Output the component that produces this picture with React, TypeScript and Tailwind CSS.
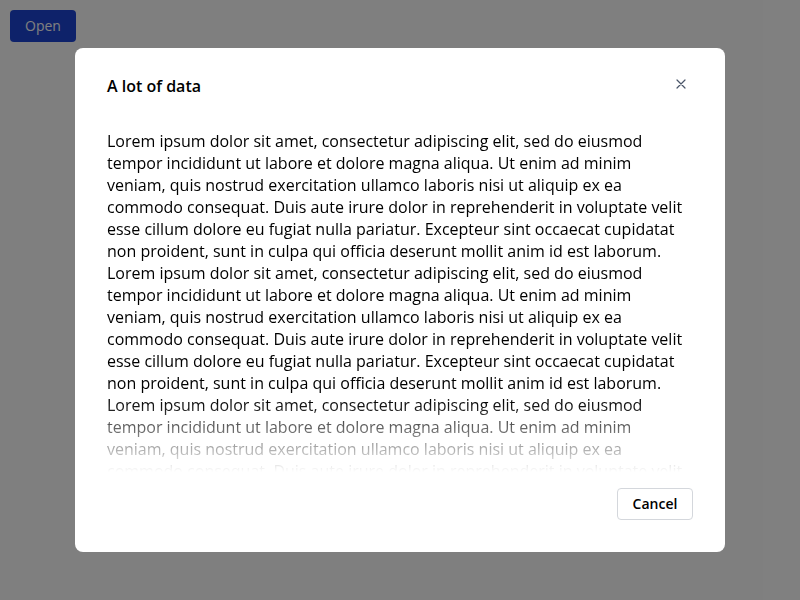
import React from "react";

const LOREM =
  "Lorem ipsum dolor sit amet, consectetur adipiscing elit, sed do eiusmod tempor incididunt ut labore et dolore magna aliqua. Ut enim ad minim veniam, quis nostrud exercitation ullamco laboris nisi ut aliquip ex ea commodo consequat. Duis aute irure dolor in reprehenderit in voluptate velit esse cillum dolore eu fugiat nulla pariatur. Excepteur sint occaecat cupidatat non proident, sunt in culpa qui officia deserunt mollit anim id est laborum.";

const App: React.FC = () => {
  return (
    <div className="relative w-[800px] h-[600px] bg-white font-['Open_Sans',sans-serif]">
      <div className="p-[10px]">
        <button className="h-8 w-[66px] rounded bg-[#1c45d4] text-white text-sm font-medium">
          Open
        </button>
      </div>

      {/* Overlay */}
      <div className="absolute inset-0 bg-black/50 flex items-center justify-center">
        <div className="w-[650px] h-[504px] bg-white rounded-lg flex flex-col">
          {/* Header */}
          <div className="flex items-start justify-between pt-[26px] pl-8 pr-[36px]">
            <h2 className="text-base leading-6 font-semibold text-black">
              A lot of data
            </h2>
            <button className="mt-[2px] w-4 h-4 flex items-center justify-center text-[#4a5568]">
              <svg width="10" height="10" viewBox="0 0 10 10" fill="none">
                <path
                  d="M1 1L9 9M9 1L1 9"
                  stroke="currentColor"
                  strokeWidth="1.2"
                  strokeLinecap="round"
                />
              </svg>
            </button>
          </div>

          {/* Body */}
          <div className="mt-8 px-8 h-[342px] overflow-hidden [mask-image:linear-gradient(to_bottom,black_calc(100%-72px),transparent)]">
            {[0, 1, 2, 3].map((i) => (
              <p key={i} className="text-base leading-[22px] text-black">
                {LOREM}
              </p>
            ))}
          </div>

          {/* Footer */}
          <div className="flex justify-end px-8 pt-4 pb-8">
            <button className="h-8 w-[76px] rounded border border-[#d4d7dc] text-sm font-semibold text-black bg-white">
              Cancel
            </button>
          </div>
        </div>
      </div>
    </div>
  );
};

export default App;
